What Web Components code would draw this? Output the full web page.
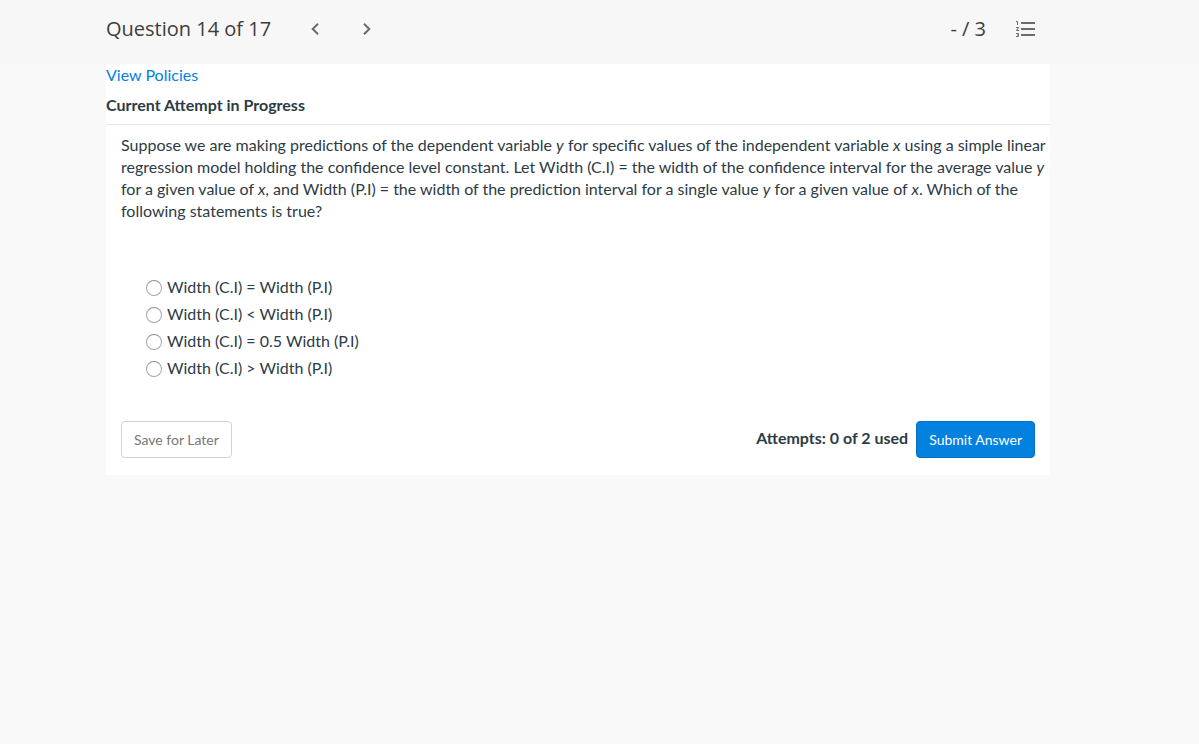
<!DOCTYPE html>
<html lang="en">
<head>
<meta charset="utf-8">
<meta name="viewport" content="width=device-width, initial-scale=1">
<title>Question 14 of 17</title>
<style>
  body {
    margin: 0;
    background: #f9f9f9;
    color: #2d3b45;
    font: 16px/22px Lato, "Open Sans", sans-serif;
    --gutter-left: 106px;
    --gutter-right: 149px;
    --blue: #0381df;
  }
</style>
</head>
<body>
<assessment-page></assessment-page>
<script>
  function define(name, html) {
    const template = document.createElement('template');
    template.innerHTML = html;
    customElements.define(name, class extends HTMLElement {
      constructor() {
        super();
        this.attachShadow({ mode: 'open' }).append(template.content.cloneNode(true));
      }
    });
  }

  define('question-header', `
    <style>
      :host { display: block; background: #f7f7f7; color: #3d3d3d;
        font: 20px/28px "Open Sans", sans-serif; }
      header { display: flex; align-items: center; box-sizing: border-box; min-height: 64px;
        padding: 0 var(--gutter-right) 6px var(--gutter-left); }
      h1 { margin: 0 32px 0 0; font: inherit; }
      nav { display: flex; gap: 28px; }
      .points { margin-left: auto; margin-right: 27px; }
      button { display: grid; place-items: center; width: 24px; height: 24px; padding: 0;
        border: 0; background: none; color: #6b6b6b; }
      .list { margin-right: 13px; }
      svg { display: block; }
    </style>
    <header>
      <h1><slot></slot></h1>
      <nav aria-label="Questions">
        <button aria-label="Previous question"><svg width="24" height="24" viewBox="0 0 24 24" fill="none" stroke="currentColor" stroke-width="2"><path d="M15 6.7 9.7 12l5.3 5.3"/></svg></button>
        <button aria-label="Next question"><svg width="24" height="24" viewBox="0 0 24 24" fill="none" stroke="currentColor" stroke-width="2"><path d="M9 6.7 14.3 12 9 17.3"/></svg></button>
      </nav>
      <span class="points"><slot name="points"></slot></span>
      <button class="list" aria-label="Question list"><svg width="24" height="24" viewBox="0 0 24 24" fill="none" stroke="currentColor"><path stroke-width="2" d="M8 6h14M8 12h14M8 18h14"/><path stroke-width="1" d="M3 4.500h1.500V8M3 10.500h2.500L3.500 13.500h2.500M3 16.500h2.500v3H3M4 18h1.500"/></svg></button>
    </header>`);

  define('question-prompt', `
    <style>
      :host { display: block; padding: 9px 0 0 15px; }
      p { margin: 0; }
    </style>
    <p><slot></slot></p>`);

  customElements.define('answer-choices', class extends HTMLElement {
    connectedCallback() {
      const root = this.attachShadow({ mode: 'open' });
      root.innerHTML = `
        <style>
          :host { display: block; padding: 54px 40px 0; }
          fieldset { display: grid; gap: 5px; justify-items: start; margin: 0; padding: 0; border: 0; }
          label { display: flex; align-items: center; gap: 5px; }
          input { appearance: none; box-sizing: border-box; width: 16px; height: 16px; margin: 1px 0 0;
            border: 1px solid #a6a6a6; border-top-color: #8e8e8e; border-radius: 50%; background: #fff; }
          input:checked { border: 5px solid var(--blue); }
        </style>
        <fieldset aria-label="Answers"></fieldset>`;
      const group = root.querySelector('fieldset');
      for (const text of this.getAttribute('choices').split('|')) {
        const label = document.createElement('label');
        const input = document.createElement('input');
        input.type = 'radio';
        input.name = 'answer';
        const span = document.createElement('span');
        span.textContent = text;
        label.append(input, span);
        group.append(label);
      }
    }
  });

  define('action-button', `
    <style>
      :host { display: block; }
      button { box-sizing: border-box; min-height: 37px; padding: 0 12px; border: 1px solid #d2d2d2;
        border-radius: 4px; background: #fff; color: #777; font: 14px/20px Lato, sans-serif; white-space: nowrap; }
      :host([primary]) button { background: var(--blue); border-color: #0271c6; color: #fff; }
    </style>
    <button type="button"><slot></slot></button>`);

  define('question-actions', `
    <style>
      :host { display: flex; align-items: center; gap: 8px; padding: 42px 15px 17px; }
      strong { margin: 0 0 4px auto; font-weight: 700; }
    </style>
    <action-button>Save for Later</action-button>
    <strong><slot></slot></strong>
    <action-button primary>Submit Answer</action-button>`);

  define('question-card', `
    <style>
      :host { display: block; margin: 0 var(--gutter-right) 0 var(--gutter-left); background: #fff; }
      a { color: var(--blue); text-decoration: none; }
      h2 { margin: 8px 0 0; padding-bottom: 8px; border-bottom: 1px solid #e8e8e8; font-size: 16px; font-weight: 700; line-height: 22px; }
    </style>
    <a href="#policies">View Policies</a>
    <h2>Current Attempt in Progress</h2>
    <slot></slot>`);

  define('assessment-page', `
    <style>:host { display: block; }</style>
    <question-header>Question 14 of 17<span slot="points">- / 3</span></question-header>
    <main>
      <question-card>
        <question-prompt>Suppose we are making predictions of the dependent variable <i>y</i> for specific values of the independent variable <i>x</i> using a simple linear<br>
          regression model holding the confidence level constant. Let Width (C.I) = the width of the confidence interval for the average value <i>y</i><br>
          for a given value of <i>x</i>, and Width (P.I) = the width of the prediction interval for a single value <i>y</i> for a given value of <i>x</i>. Which of the<br>
          following statements is true?</question-prompt>
        <answer-choices choices="Width (C.I) = Width (P.I)|Width (C.I) &lt; Width (P.I)|Width (C.I) = 0.5 Width (P.I)|Width (C.I) &gt; Width (P.I)"></answer-choices>
        <question-actions>Attempts: 0 of 2 used</question-actions>
      </question-card>
    </main>`);
</script>
</body>
</html>
